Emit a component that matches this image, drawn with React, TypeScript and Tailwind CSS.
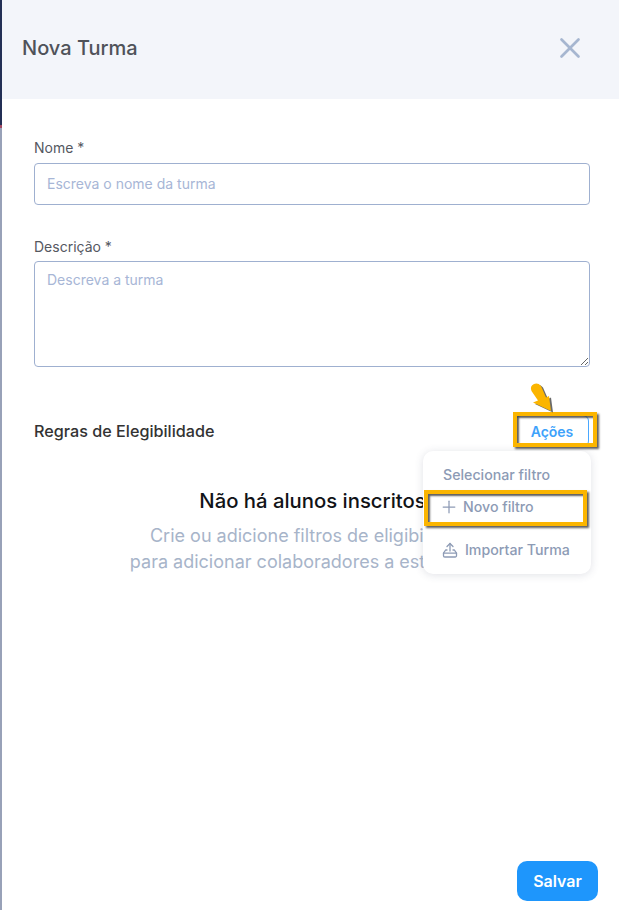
import { Plus, X } from "lucide-react";

const font = { fontFamily: "Inter, 'Liberation Sans', sans-serif" };

function UploadIcon() {
  return (
    <svg width="16" height="17" viewBox="0 0 16 17" fill="none" stroke="#8d9bb5" strokeWidth="1.3" strokeLinecap="round" strokeLinejoin="round">
      <path d="M8 9V1.5" />
      <path d="M5 4.5 8 1.5l3 3" />
      <path d="M5 8H3.6L1.5 11.2v2.5a1.3 1.3 0 0 0 1.3 1.3h10.4a1.3 1.3 0 0 0 1.3-1.3v-2.5L12.4 8H11" />
      <path d="M1.5 11.2h13" />
    </svg>
  );
}

function Pointer() {
  const shape = "M5.5 10 Q3.5 5 8 3 Q12 1.5 15 5 L20 16.5 L23 15 L25 30 L7 21.5 L12 19.5 Z";
  return (
    <svg width="30" height="34" viewBox="0 0 30 34" className="absolute left-[526px] top-[381px]">
      <path d={shape} fill="#2b2b2b" opacity="0.7" transform="translate(2 1.5)" />
      <path d={shape} fill="#fbb500" />
    </svg>
  );
}

export default function App() {
  return (
    <div className="relative flex h-[910px] w-[619px] overflow-hidden bg-white" style={font}>
      <div className="flex w-[2px] flex-col bg-[#98a1b8]">
        <div className="h-[125px] bg-[#232f55]" />
        <div className="h-[3px] bg-[#a34a63]" />
      </div>

      <div className="flex flex-1 flex-col">
        <div className="flex h-[99px] items-center justify-between bg-[#f3f5fa] pb-[3px] pl-[20px] pr-[32px]">
          <h1 className="text-[20px] font-medium text-[#4f5259]">Nova Turma</h1>
          <X size={34} strokeWidth={1.9} className="text-[#a6b6d0]" />
        </div>

        <div className="flex flex-1 flex-col pl-[32px] pr-[29px] pt-[39px]">
          <label className="text-[14px] leading-[20px] text-[#55585f]">Nome *</label>
          <input
            readOnly
            placeholder="Escreva o nome da turma"
            className="mt-[5px] h-[42px] w-full rounded-[4px] border border-[#9fb0d0] px-[12px] pb-[1px] text-[14px] outline-none placeholder:text-[#a7b6d6]"
          />

          <label className="mt-[32px] text-[14px] leading-[20px] text-[#55585f]">Descrição *</label>
          <textarea
            readOnly
            placeholder="Descreva a turma"
            className="mt-[4px] block h-[106px] w-full rounded-[4px] border border-[#9fb0d0] px-[12px] py-[9px] text-[14px] leading-[18px] outline-none placeholder:text-[#a7b6d6]"
          />

          <div className="mt-[45px] flex h-[40px] items-center justify-between">
            <span className="mb-[2px] text-[16.2px] leading-[20px] font-medium text-[#333]">Regras de Elegibilidade</span>
            <button className="mb-[2px] mr-[1px] h-[32px] w-[74px] rounded-[6px] border border-[#4aa8ff] text-[14px] font-semibold text-[#3ea2fb]">
              Ações
            </button>
          </div>

          <div className="mt-[35px] flex flex-col items-center pl-[1px] text-center whitespace-nowrap">
            <h2 className="text-[20.3px] leading-[28px] font-medium text-[#111317]">Não há alunos inscritos</h2>
            <p className="mt-[8px] text-[18px] leading-[26px] text-[#a7b4c9]">
              Crie ou adicione filtros de eligibilidade
              <br />
              para adicionar colaboradores a esta turma.
            </p>
          </div>

          <div className="mt-auto flex justify-end pb-[9px]">
            <button className="-mr-[8px] h-[40px] w-[81px] rounded-[10px] bg-[#1e96fc] text-[16px] font-semibold text-white">
              Salvar
            </button>
          </div>
        </div>
      </div>

      {/* menu de ações */}
      <div className="absolute left-[423px] top-[451px] flex h-[123px] w-[168px] flex-col rounded-[10px] bg-white text-[14.2px] font-medium text-[#8d9bb5] shadow-[0_1px_8px_rgba(60,70,100,0.16)]">
        <div className="pl-[20px] pt-[15px] leading-[18px]">Selecionar filtro</div>
        <div className="mt-[13px] flex h-[20px] items-center gap-[4px] pl-[16px] leading-[18px]">
          <Plus size={20} strokeWidth={1.5} />
          <span>Novo filtro</span>
        </div>
        <div className="mt-[24px] flex h-[18px] items-center gap-[7px] pl-[19px] leading-[18px]">
          <UploadIcon />
          <span>Importar Turma</span>
        </div>
      </div>

      {/* destaques amarelos do tutorial */}
      <div className="absolute left-[513px] top-[412px] h-[35px] w-[84px] border-[4px] border-[#fbb500] shadow-[2px_2px_2px_rgba(40,40,40,0.75),inset_2px_2px_2px_rgba(40,40,40,0.75)]" />
      <div className="absolute left-[424px] top-[490px] h-[36px] w-[163px] border-[4px] border-[#fbb500] shadow-[2px_2px_2px_rgba(40,40,40,0.75),inset_2px_2px_2px_rgba(40,40,40,0.75)]" />
      <Pointer />
    </div>
  );
}
